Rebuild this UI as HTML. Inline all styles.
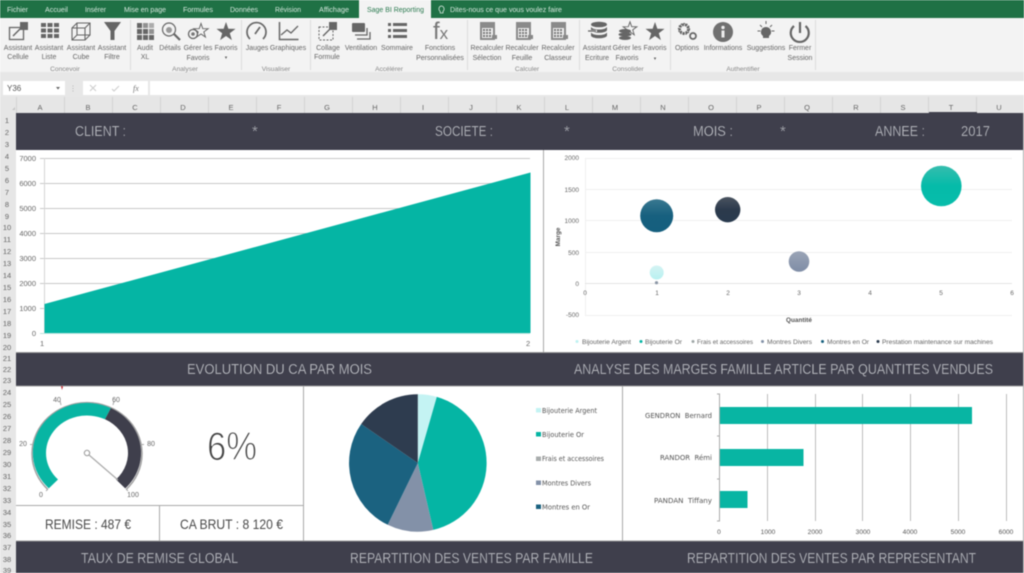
<!DOCTYPE html>
<html lang="fr"><head><meta charset="utf-8"><title>Sage BI Reporting</title>
<style>
html,body{margin:0;padding:0;background:#fff;width:1024px;height:573px;overflow:hidden}
svg{display:block;filter:blur(.4px)}
text{font-family:"Liberation Sans",sans-serif}
.t{font-size:7.6px;fill:#d5e6dc}
.r{font-size:7px;fill:#666;text-anchor:middle}
.g{font-size:6.6px;fill:#888;text-anchor:middle}
.c{font-size:7.5px;fill:#666;text-anchor:middle}
.n{font-size:7.5px;fill:#666;text-anchor:middle}
.b{font-size:15px;fill:#bfc1c6;stroke:#3f3f4c;stroke-width:.25px}
.a{font-size:7.5px;fill:#666}
.s{font-size:6.5px;fill:#666}
.d{font-family:"DejaVu Sans",sans-serif;font-size:6.6px;fill:#555}
.i{fill:#666}
.o{fill:none;stroke:#666}
</style></head><body>
<svg width="1024" height="573" viewBox="0 0 1024 573" xmlns="http://www.w3.org/2000/svg">
<defs>
<polygon id="star" points="0,-10 2.35,-3.2 9.5,-3.1 3.8,1.2 5.9,8.1 0,4 -5.9,8.1 -3.8,1.2 -9.5,-3.1 -2.35,-3.2"/>
<linearGradient id="gt" x1="0" y1="0" x2="0" y2="1"><stop offset="0" stop-color="#35bdae"/><stop offset=".5" stop-color="#05bba9"/><stop offset="1" stop-color="#08bdab"/></linearGradient>
<linearGradient id="gb" x1="0" y1="0" x2="0" y2="1"><stop offset="0" stop-color="#3a7890"/><stop offset=".5" stop-color="#17607f"/><stop offset="1" stop-color="#155f7e"/></linearGradient>
<linearGradient id="gd" x1="0" y1="0" x2="0" y2="1"><stop offset="0" stop-color="#4a5460"/><stop offset=".5" stop-color="#2c3a4c"/><stop offset="1" stop-color="#293a4e"/></linearGradient>
<linearGradient id="gg" x1="0" y1="0" x2="0" y2="1"><stop offset="0" stop-color="#9aa4b6"/><stop offset="1" stop-color="#7f8da6"/></linearGradient>
<linearGradient id="gl" x1="0" y1="0" x2="0" y2="1"><stop offset="0" stop-color="#d4f3f3"/><stop offset="1" stop-color="#b8f1f1"/></linearGradient>
</defs>

<!-- title tabs -->
<rect width="1024" height="18" fill="#1f7145"/>
<rect x="359" y="0" width="72" height="18" fill="#f3f3f3"/>
<text class="t" x="7" y="12" textLength="21" lengthAdjust="spacingAndGlyphs">Fichier</text>
<text class="t" x="45" y="12" textLength="23" lengthAdjust="spacingAndGlyphs">Accueil</text>
<text class="t" x="85" y="12" textLength="21" lengthAdjust="spacingAndGlyphs">Insérer</text>
<text class="t" x="124" y="12" textLength="42" lengthAdjust="spacingAndGlyphs">Mise en page</text>
<text class="t" x="183" y="12" textLength="30" lengthAdjust="spacingAndGlyphs">Formules</text>
<text class="t" x="230" y="12" textLength="28" lengthAdjust="spacingAndGlyphs">Données</text>
<text class="t" x="275" y="12" textLength="26" lengthAdjust="spacingAndGlyphs">Révision</text>
<text class="t" x="319" y="12" textLength="30" lengthAdjust="spacingAndGlyphs">Affichage</text>
<text class="t" x="367" y="12" textLength="57" lengthAdjust="spacingAndGlyphs" style="fill:#2b7a50">Sage BI Reporting</text>
<path d="M441 6a3 3 0 0 1 2 5.300v1.700h-2.800v-1.700A3 3 0 0 1 441 6z" fill="none" stroke="#d5e6dc" stroke-width=".8"/>
<text class="t" x="450" y="12" textLength="112" lengthAdjust="spacingAndGlyphs">Dites-nous ce que vous voulez faire</text>

<!-- ribbon -->
<rect y="18" width="1024" height="54" fill="#f3f3f3"/>
<rect y="72" width="1024" height="25" fill="#e7e7e7"/>
<g stroke="#dcdcdc"><path d="M130.500 20V70M241.500 20V70M310.500 20V70M467.500 20V70M579.500 20V70M670.500 20V70M815.500 20V70"/></g>

<!-- ribbon icons -->
<g>
<!-- cellule -->
<rect x="9.500" y="27.500" width="14" height="12" class="o" stroke-width="1.300"/><rect x="20" y="22" width="8" height="8" class="i"/><path d="M13 36l8-8" class="o" stroke-width="1.500"/>
<!-- liste -->
<g class="i"><rect x="41" y="23" width="5" height="4"/><rect x="47.500" y="23" width="5" height="4"/><rect x="54" y="23" width="5" height="4"/><rect x="41" y="28.500" width="5" height="4"/><rect x="47.500" y="28.500" width="5" height="4"/><rect x="54" y="28.500" width="5" height="4"/><rect x="41" y="34" width="5" height="4"/><rect x="47.500" y="34" width="5" height="4"/><rect x="54" y="34" width="5" height="4"/></g>
<!-- cube -->
<path d="M72 28h13v12H72zM77 23h13v12H77zM72 28l5-5M85 28l5-5M85 40l5-5M72 40l5-5" class="o" stroke-width="1.100"/>
<!-- filtre -->
<path d="M104 22h17l-6.500 9v9h-4v-9z" class="i"/>
<!-- audit -->
<g class="i"><rect x="137" y="23" width="5" height="5"/><rect x="143" y="23" width="5" height="5" opacity=".7"/><rect x="149" y="23" width="5" height="5" opacity=".5"/><rect x="137" y="29" width="5" height="5"/><rect x="143" y="29" width="5" height="5"/><rect x="149" y="29" width="5" height="5" opacity=".7"/><rect x="137" y="35" width="5" height="5"/><rect x="143" y="35" width="5" height="5"/><rect x="149" y="35" width="5" height="5"/></g>
<!-- details -->
<circle cx="169" cy="29.500" r="6.500" class="o" stroke-width="1.200"/><circle cx="169" cy="30" r="3" fill="#999"/><path d="M174 34l6 6" class="o" stroke-width="2.200"/>
<!-- gerer -->
<use href="#star" transform="translate(201,31) scale(.75)" fill="none" stroke="#666" stroke-width="1.300"/><circle cx="193" cy="34" r="4.500" class="o" stroke-width="1.300"/><circle cx="193" cy="34" r="1.800" fill="#777"/>
<!-- favoris -->
<use href="#star" transform="translate(226,32)" class="i"/>
<!-- jauges -->
<path d="M250 39a9.500 9.500 0 1 1 13 0" class="o" stroke-width="1.700"/><path d="M255 34l5-7" class="o" stroke-width="1.700"/>
<!-- graphiques -->
<path d="M279.500 22v17.500h19" class="o" stroke-width="1.500"/><path d="M281 35l6-5 4 3 7-7" class="o" stroke-width="1.300"/>
<!-- collage -->
<rect x="319" y="27" width="14" height="13" class="o" stroke-dasharray="2 1.500"/><rect x="329" y="22" width="8" height="8" class="i"/><path d="M323 36l8-8" class="o" stroke-width="1.400"/>
<!-- ventilation -->
<rect x="352" y="23" width="13" height="9" rx="1" class="i"/><path d="M367 28v7h-12M370 32v7h-13" class="o" stroke-width="1.300"/>
<!-- sommaire -->
<g class="i"><rect x="388" y="23" width="3" height="3"/><rect x="393" y="23" width="14" height="3"/><rect x="388" y="29" width="3" height="3"/><rect x="393" y="29" width="14" height="3"/><rect x="388" y="35" width="3" height="3"/><rect x="393" y="35" width="14" height="3"/></g>
<!-- fx -->
<text x="433" y="39" style="font-size:17px;fill:#777"><tspan style="font-size:24px">f</tspan>x</text>
<!-- calculators -->
<g id="calc1"><rect x="480" y="22" width="15" height="18" fill="#8a8a8a"/><rect x="482" y="28" width="11" height="10" fill="#eee"/><g fill="#777"><rect x="483" y="29" width="2" height="2"/><rect x="486" y="29" width="2" height="2"/><rect x="489" y="29" width="2" height="2"/><rect x="483" y="32" width="2" height="2"/><rect x="486" y="32" width="2" height="2"/><rect x="489" y="32" width="2" height="2"/><rect x="483" y="35" width="2" height="2"/><rect x="486" y="35" width="2" height="2"/><rect x="489" y="35" width="2" height="2"/></g><rect x="492" y="35" width="5" height="4" fill="#888"/></g>
<use href="#calc1" x="36"/><use href="#calc1" x="71"/>
<!-- ecriture -->
<ellipse cx="599" cy="24.500" rx="8" ry="2.800" class="i"/><path d="M591 27v3c0 1.500 3.500 2.800 8 2.800s8-1.300 8-2.800v-3c-1 1.500-4 2.500-8 2.500s-7-1-8-2.500zM591 32.500v3c0 1.500 3.500 2.800 8 2.800s8-1.300 8-2.800v-3c-1 1.500-4 2.500-8 2.500s-7-1-8-2.500z" class="i"/><path d="M588 31h9" stroke="#f3f3f3" stroke-width="2"/><path d="M588 31h8" class="o" stroke-width="1.300"/>
<!-- gerer 2 -->
<use href="#star" transform="translate(630,29) scale(.72)" fill="none" stroke="#666" stroke-width="1.300"/><g class="i"><ellipse cx="625" cy="31" rx="6" ry="2"/><ellipse cx="625" cy="34.500" rx="6.500" ry="2"/><ellipse cx="625" cy="38" rx="6" ry="2"/></g>
<!-- favoris 2 -->
<use href="#star" transform="translate(655,32)" class="i"/>
<!-- options -->
<circle cx="684" cy="29" r="4.300" class="o" stroke-width="2.600" stroke-dasharray="2.200 .8"/><circle cx="684" cy="29" r="5.500" class="o" stroke-width="1.200" stroke-dasharray="1.500 1.300"/><circle cx="693" cy="36" r="3" class="o" stroke-width="1.700"/>
<!-- information -->
<circle cx="723" cy="32" r="10" fill="#707070"/><rect x="721.500" y="30.500" width="3" height="7" fill="#eee"/><circle cx="723" cy="27.500" r="1.700" fill="#eee"/>
<!-- suggestions -->
<path d="M766 27a5 5 0 0 1 3 9v2h-6v-2a5 5 0 0 1 3-9z" class="i"/><path d="M766 21v3M757.500 31h3M771.500 31h3M760 25l2 2M772 25l-2 2" class="o"/>
<!-- power -->
<path d="M794 26a9 9 0 1 0 11.500 0" class="o" stroke-width="2.200"/><path d="M800 22v11" class="o" stroke-width="2.200"/>
</g>

<!-- ribbon labels -->
<text class="r" x="18" y="50">Assistant</text><text class="r" x="18" y="59">Cellule</text>
<text class="r" x="49" y="50">Assistant</text><text class="r" x="49" y="59">Liste</text>
<text class="r" x="81" y="50">Assistant</text><text class="r" x="81" y="59">Cube</text>
<text class="r" x="112" y="50">Assistant</text><text class="r" x="112" y="59">Filtre</text>
<text class="r" x="145" y="50">Audit</text><text class="r" x="145" y="59">XL</text>
<text class="r" x="170" y="50">Détails</text>
<text class="r" x="198" y="50">Gérer les</text><text class="r" x="198" y="60">Favoris</text>
<text class="r" x="226" y="50">Favoris</text><text class="r" x="226" y="59" style="font-size:5px">▾</text>
<text class="r" x="257" y="50">Jauges</text>
<text class="r" x="288" y="50">Graphiques</text>
<text class="r" x="328" y="50">Collage</text><text class="r" x="327" y="59">Formule</text>
<text class="r" x="361" y="50">Ventilation</text>
<text class="r" x="397" y="50">Sommaire</text>
<text class="r" x="440" y="50">Fonctions</text><text class="r" x="440" y="60">Personnalisées</text>
<text class="r" x="487" y="50">Recalculer</text><text class="r" x="487" y="60">Sélection</text>
<text class="r" x="522" y="50">Recalculer</text><text class="r" x="522" y="60">Feuille</text>
<text class="r" x="558" y="50">Recalculer</text><text class="r" x="558" y="60">Classeur</text>
<text class="r" x="597" y="50">Assistant</text><text class="r" x="597" y="60">Ecriture</text>
<text class="r" x="627" y="50">Gérer les</text><text class="r" x="627" y="60">Favoris</text>
<text class="r" x="655" y="50">Favoris</text><text class="r" x="655" y="60" style="font-size:5px">▾</text>
<text class="r" x="687" y="50">Options</text>
<text class="r" x="723" y="50">Informations</text>
<text class="r" x="766" y="50">Suggestions</text>
<text class="r" x="800" y="50">Fermer</text><text class="r" x="800" y="60">Session</text>
<text class="g" x="65" y="71">Concevoir</text><text class="g" x="185" y="71">Analyser</text><text class="g" x="276" y="71">Visualiser</text><text class="g" x="389" y="71">Accélérer</text><text class="g" x="527" y="71">Calculer</text><text class="g" x="628" y="71">Consolider</text><text class="g" x="743" y="71">Authentifier</text>

<!-- formula bar -->
<rect x="3" y="81" width="62" height="14" fill="#fff"/><text x="7" y="91" style="font-size:8px;fill:#555">Y36</text><path d="M56 87l2 2.500 2-2.500z" fill="#666"/>
<rect x="83" y="81" width="65" height="14" fill="#fff"/><rect x="150" y="81" width="874" height="14" fill="#fff"/>
<path d="M90 85l6 6M96 85l-6 6M112 89l2 2 5-5" fill="none" stroke="#ccc"/>
<text x="133" y="91" style="font-family:'Liberation Serif',serif;font-style:italic;font-size:8px;fill:#777">fx</text>
<circle cx="73" cy="86" r=".5" fill="#aaa"/><circle cx="73" cy="88.500" r=".5" fill="#aaa"/><circle cx="73" cy="91" r=".5" fill="#aaa"/>

<!-- column headers -->
<rect y="97" width="1024" height="16" fill="#e6e6e6"/>
<path d="M12 110h3v-3z" fill="#c4c4c4"/>
<g stroke="#d4d4d4"><path d="M16.500 97V113M64.500 97V113M112.500 97V113M160.500 97V113M208.500 97V113M256.500 97V113M304.500 97V113M352.500 97V113M400.500 97V113M448.500 97V113M496.500 97V113M544.500 97V113M592.500 97V113M640.500 97V113M688.500 97V113M736.500 97V113M784.500 97V113M832.500 97V113M880.500 97V113M928.500 97V113M976.500 97V113"/></g>
<text class="c" x="40" y="110">A</text><text class="c" x="88" y="110">B</text><text class="c" x="135" y="110">C</text><text class="c" x="183" y="110">D</text><text class="c" x="231" y="110">E</text><text class="c" x="279" y="110">F</text><text class="c" x="327" y="110">G</text><text class="c" x="375" y="110">H</text><text class="c" x="423" y="110">I</text><text class="c" x="471" y="110">J</text><text class="c" x="519" y="110">K</text><text class="c" x="567" y="110">L</text><text class="c" x="615" y="110">M</text><text class="c" x="663" y="110">N</text><text class="c" x="711" y="110">O</text><text class="c" x="759" y="110">P</text><text class="c" x="807" y="110">Q</text><text class="c" x="856" y="110">R</text><text class="c" x="903" y="110">S</text><text class="c" x="951" y="110">T</text><text class="c" x="999" y="110">U</text>

<!-- row headers -->
<rect y="113" width="16" height="460" fill="#e6e6e6"/>
<g>
<text class="n" x="7" y="123">1</text><text class="n" x="7" y="135">2</text><text class="n" x="7" y="147">3</text><text class="n" x="7" y="159">4</text><text class="n" x="7" y="171">5</text><text class="n" x="7" y="183">6</text><text class="n" x="7" y="195">7</text><text class="n" x="7" y="207">8</text><text class="n" x="7" y="219">9</text><text class="n" x="7" y="230">10</text><text class="n" x="7" y="242">11</text><text class="n" x="7" y="254">12</text><text class="n" x="7" y="266">13</text><text class="n" x="7" y="278">14</text><text class="n" x="7" y="290">15</text><text class="n" x="7" y="302">16</text><text class="n" x="7" y="314">17</text><text class="n" x="7" y="326">18</text><text class="n" x="7" y="338">19</text><text class="n" x="7" y="350">20</text><text class="n" x="7" y="361">21</text><text class="n" x="7" y="372">22</text><text class="n" x="7" y="383">23</text><text class="n" x="7" y="395">24</text><text class="n" x="7" y="407">25</text><text class="n" x="7" y="419">26</text><text class="n" x="7" y="431">27</text><text class="n" x="7" y="443">28</text><text class="n" x="7" y="455">29</text><text class="n" x="7" y="467">30</text><text class="n" x="7" y="479">31</text><text class="n" x="7" y="491">32</text><text class="n" x="7" y="503">33</text><text class="n" x="7" y="515">34</text><text class="n" x="7" y="527">35</text><text class="n" x="7" y="538">36</text><text class="n" x="7" y="550">37</text><text class="n" x="7" y="562">38</text><text class="n" x="7" y="573">39</text>
</g>

<!-- dark bands -->
<g fill="#3f3f4c"><rect x="16" y="113" width="1007" height="37"/><rect x="16" y="353" width="1007" height="33"/><rect x="16" y="541" width="1007" height="32"/></g>
<rect x="929" y="112" width="48" height="1.500" fill="#3f3f4c"/>
<text class="b" x="75" y="136" textLength="51" lengthAdjust="spacingAndGlyphs">CLIENT :</text>
<text class="b" x="252" y="136">*</text>
<text class="b" x="435" y="136" textLength="58" lengthAdjust="spacingAndGlyphs">SOCIETE :</text>
<text class="b" x="564" y="136">*</text>
<text class="b" x="693" y="136" textLength="40" lengthAdjust="spacingAndGlyphs">MOIS :</text>
<text class="b" x="780" y="136">*</text>
<text class="b" x="875" y="136" textLength="50" lengthAdjust="spacingAndGlyphs">ANNEE :</text>
<text class="b" x="961" y="136" textLength="29" lengthAdjust="spacingAndGlyphs">2017</text>
<text class="b" x="187" y="374" textLength="185" lengthAdjust="spacingAndGlyphs">EVOLUTION DU CA PAR MOIS</text>
<text class="b" x="574" y="374" textLength="419" lengthAdjust="spacingAndGlyphs">ANALYSE DES MARGES FAMILLE ARTICLE PAR QUANTITES VENDUES</text>
<text class="b" x="81" y="563" textLength="157" lengthAdjust="spacingAndGlyphs">TAUX DE REMISE GLOBAL</text>
<text class="b" x="350" y="563" textLength="243" lengthAdjust="spacingAndGlyphs">REPARTITION DES VENTES PAR FAMILLE</text>
<text class="b" x="687" y="563" textLength="289" lengthAdjust="spacingAndGlyphs">REPARTITION DES VENTES PAR REPRESENTANT</text>

<!-- dividers -->
<g stroke="#a9a9a9"><path d="M543.500 150V353M303.500 386V541M622.500 386V541M159.500 505V541M16 505.500H304M1023.500 113V573" fill="none"/></g>
<path d="M16 352.500H1023M16 386H1023M16 541H1023" stroke="#999" stroke-width="1"/>

<!-- area chart -->
<g stroke="#c9c9c9"><path d="M40 158.500H530M40 183.500H530M40 208.500H530M40 233.500H530M40 258.500H530M40 283.500H530M40 308.500H530"/></g>
<path d="M44.500 158V333" stroke="#d5d5d5"/>
<path d="M44.500 304L530.500 172.500V333H44.500z" fill="#05b5a4"/>
<path d="M40 333.500H530" stroke="#bfe4df"/>
<g class="a" text-anchor="end"><text x="36" y="161">7000</text><text x="36" y="186">6000</text><text x="36" y="211">5000</text><text x="36" y="236">4000</text><text x="36" y="261">3000</text><text x="36" y="286">2000</text><text x="36" y="311">1000</text><text x="36" y="336">0</text></g>
<text class="a" x="40" y="346">1</text><text class="a" x="526" y="346">2</text>

<!-- bubble chart -->
<g stroke="#f0f0f0"><path d="M585 158.500H1012M585 189.500H1012M585 220.500H1012M585 252.500H1012M585 315.500H1012M585.500 158V315"/></g>
<path d="M585 283.500H1012" stroke="#e4e4e4"/>
<g class="s" text-anchor="end"><text x="579" y="160">2000</text><text x="579" y="192">1500</text><text x="579" y="223">1000</text><text x="579" y="255">500</text><text x="579" y="286">0</text><text x="579" y="317">-500</text></g>
<g class="s" text-anchor="middle"><text x="585" y="295">0</text><text x="657" y="295">1</text><text x="728" y="295">2</text><text x="799" y="295">3</text><text x="870" y="295">4</text><text x="941" y="295">5</text><text x="1012" y="295">6</text></g>
<circle cx="941.300" cy="186" r="20.300" fill="url(#gt)"/>
<circle cx="656.700" cy="215.700" r="16.500" fill="url(#gb)"/>
<circle cx="727.700" cy="209.700" r="12.700" fill="url(#gd)"/>
<circle cx="799" cy="261.500" r="10.300" fill="url(#gg)"/>
<circle cx="656.700" cy="272.500" r="7" fill="url(#gl)"/>
<circle cx="656.500" cy="282.700" r="1.600" fill="#8b96a5"/>
<text x="799" y="322" text-anchor="middle" style="font-size:6.400px;font-weight:bold;fill:#555">Quantité</text>
<text transform="translate(560,237) rotate(-90)" text-anchor="middle" style="font-size:6.400px;font-weight:bold;fill:#555">Marge</text>
<circle cx="577" cy="341.500" r="1.500" fill="#bff2f2"/><text class="s" x="582" y="344" textLength="49" lengthAdjust="spacingAndGlyphs">Bijouterie Argent</text>
<circle cx="641" cy="341.500" r="1.500" fill="#05b5a4"/><text class="s" x="645" y="344" textLength="37" lengthAdjust="spacingAndGlyphs">Bijouterie Or</text>
<circle cx="693" cy="341.500" r="1.500" fill="#a0a7a7"/><text class="s" x="697" y="344" textLength="56" lengthAdjust="spacingAndGlyphs">Frais et accessoires</text>
<circle cx="762.500" cy="341.500" r="1.500" fill="#8391a8"/><text class="s" x="767" y="344" textLength="45" lengthAdjust="spacingAndGlyphs">Montres Divers</text>
<circle cx="822.500" cy="341.500" r="1.500" fill="#155f7e"/><text class="s" x="827" y="344" textLength="42" lengthAdjust="spacingAndGlyphs">Montres en Or</text>
<circle cx="878" cy="341.500" r="1.500" fill="#2a3a4d"/><text class="s" x="882" y="344" textLength="111" lengthAdjust="spacingAndGlyphs">Prestation maintenance sur machines</text>

<!-- gauge -->
<path d="M61 386l2 .5-1 3.500z" fill="#c0202a"/>
<path d="M47.800 489.400A55 51 0 1 1 126.200 489.400" fill="none" stroke="#a2a2a2" stroke-width="1.500"/>
<path d="M48.800 488.400A54 50 0 0 1 110.800 408.100L105 419.300A41 37.500 0 0 0 58 479.500Z" fill="#08b5a3"/>
<path d="M110.800 408.100A54 50 0 0 1 125.200 488.400L116 479.500A41 37.500 0 0 0 105 419.300Z" fill="#3f3f4c"/>
<path d="M33 444.500h-3M61 405l-1-4M113 405l1-4M141 444.500h3M48 489l-2 2M126 489l2 2" stroke="#aaa"/>
<path d="M89 455L118 480" stroke="#aaa" stroke-width="1.200"/>
<circle cx="87" cy="453" r="2.700" fill="#fff" stroke="#999" stroke-width="1"/>
<g style="font-size:7px;fill:#666" text-anchor="middle"><text x="41" y="497">0</text><text x="23" y="446">20</text><text x="57" y="402">40</text><text x="116" y="402">60</text><text x="151" y="446">80</text><text x="133" y="497">100</text></g>
<text x="207" y="460" textLength="50" lengthAdjust="spacingAndGlyphs" style="font-size:40px;fill:#444;stroke:#fff;stroke-width:1.100px">6%</text>
<text x="45" y="529" textLength="86" lengthAdjust="spacingAndGlyphs" style="font-size:14px;fill:#4a4a4a">REMISE : 487 €</text>
<text x="180" y="529" textLength="103" lengthAdjust="spacingAndGlyphs" style="font-size:14px;fill:#4a4a4a">CA BRUT : 8 120 €</text>

<!-- pie -->
<path d="M417.800 463V394.300A68.700 68.700 0 0 1 436.800 396.900Z" fill="#c4f3f3"/>
<path d="M417.800 463L436.800 396.900A68.700 68.700 0 0 1 433.300 529.900Z" fill="#05b5a4"/>
<path d="M417.800 463L433.300 529.900A68.700 68.700 0 0 1 387.700 524.800Z" fill="#8391a8"/>
<path d="M417.800 463L387.700 524.800A68.700 68.700 0 0 1 361.200 424Z" fill="#1b6280"/>
<path d="M417.800 463L361.200 424A68.700 68.700 0 0 1 417.800 394.300Z" fill="#2e3c4f"/>
<rect x="536" y="408" width="5" height="4.500" fill="#c4f3f3"/><text class="d" x="542" y="413" textLength="55" lengthAdjust="spacingAndGlyphs">Bijouterie Argent</text>
<rect x="536" y="432" width="5" height="4.500" fill="#05b5a4"/><text class="d" x="542" y="437" textLength="42" lengthAdjust="spacingAndGlyphs">Bijouterie Or</text>
<rect x="536" y="456.500" width="5" height="4.500" fill="#a9adad"/><text class="d" x="542" y="461" textLength="62" lengthAdjust="spacingAndGlyphs">Frais et accessoires</text>
<rect x="536" y="480.500" width="5" height="4.500" fill="#8391a8"/><text class="d" x="542" y="485.500" textLength="49" lengthAdjust="spacingAndGlyphs">Montres Divers</text>
<rect x="536" y="504.500" width="5" height="4.500" fill="#1b6280"/><text class="d" x="542" y="509.500" textLength="48" lengthAdjust="spacingAndGlyphs">Montres en Or</text>

<!-- bar chart -->
<g stroke="#bdbdbd"><path d="M767.500 394V521M815.500 394V521M862.500 394V521M910.500 394V521M958.500 394V521M1006.500 394V521"/></g>
<path d="M719.500 394V521M717 394h3M717 436h3M717 479h3M717 521h3" stroke="#aaa" fill="none"/>
<rect x="720" y="407" width="252" height="17" fill="#08b5a3"/>
<rect x="720" y="449" width="83.500" height="17" fill="#08b5a3"/>
<rect x="720" y="491" width="27.500" height="17" fill="#08b5a3"/>
<text class="d" x="645" y="418" textLength="67" lengthAdjust="spacingAndGlyphs" xml:space="preserve">GENDRON  Bernard</text>
<text class="d" x="660" y="460" textLength="52" lengthAdjust="spacingAndGlyphs" xml:space="preserve">RANDOR  Rémi</text>
<text class="d" x="654" y="503" textLength="58" lengthAdjust="spacingAndGlyphs" xml:space="preserve">PANDAN  Tiffany</text>
<g class="d" text-anchor="middle"><text x="719" y="534">0</text><text x="768" y="534">1000</text><text x="815" y="534">2000</text><text x="863" y="534">3000</text><text x="910" y="534">4000</text><text x="958" y="534">5000</text><text x="1006" y="534">6000</text></g>
</svg>
</body></html>
